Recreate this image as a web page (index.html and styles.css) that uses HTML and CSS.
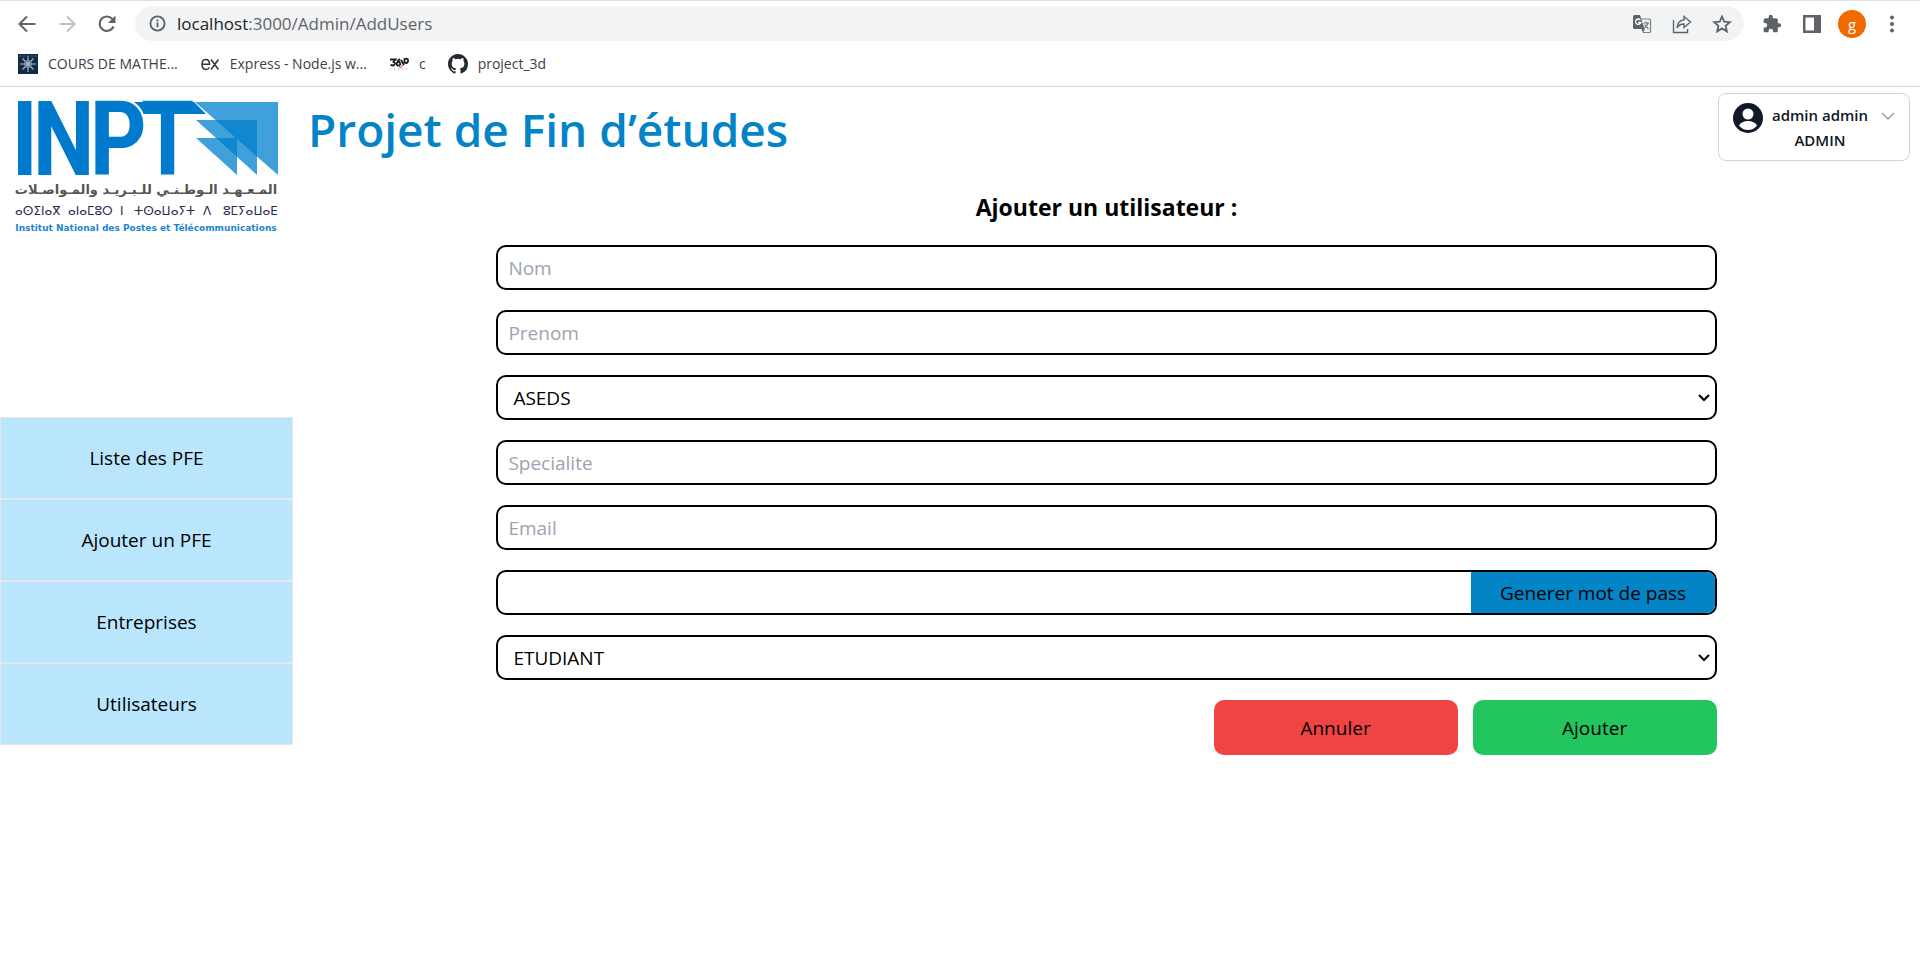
FILE: index.html
```html
<!DOCTYPE html>
<html lang="fr">
<head>
<meta charset="utf-8">
<title>Projet de Fin d’études</title>
<link rel="stylesheet" href="styles.css">
</head>
<body>
<div class="browser">
  <div class="toolbar">
    <button class="tool" aria-label="Retour"><svg class="icon" viewBox="0 0 20 20"><path d="M18.500 10H3M10 2.500L2.500 10l7.500 7.500" fill="none" stroke="#5f6368" stroke-width="2"/></svg></button>
    <button class="tool" aria-label="Suivant"><svg class="icon" viewBox="0 0 20 20"><path d="M2.500 10H17M10 2.500l7.500 7.500-7.500 7.500" fill="none" stroke="#bdc1c6" stroke-width="2"/></svg></button>
    <button class="tool" aria-label="Actualiser"><svg class="icon" viewBox="0 0 20 20"><path d="M16.500 12.500A7.200 7.200 0 1 1 15.300 5" fill="none" stroke="#5f6368" stroke-width="2.200"/><path d="M18.500 1.500v7.500H11z" fill="#5f6368"/></svg></button>
    <div class="omnibox">
      <svg class="info" viewBox="0 0 18 18"><circle cx="9" cy="9" r="7.500" fill="none" stroke="#5f6368" stroke-width="2"/><path d="M9 8v5M9 4.800v2" stroke="#5f6368" stroke-width="2"/></svg>
      <span class="url"><span class="host">localhost</span>:3000/Admin/AddUsers</span>
      <button class="tool" aria-label="Traduire"><svg class="icon" viewBox="0 0 20 20"><path d="M9 5h8.500q1 0 1 1v11.500q0 1-1 1H11" fill="none" stroke="#7d8084" stroke-width="1.200"/><path d="M2.500 1H8l4.500 14H2.500Q1 15 1 13.500v-11Q1 1 2.500 1z" fill="#5f6368"/><path d="M9.500 15H13l-2 3.500z" fill="#5f6368"/><path d="M8.300 6A2.700 2.700 0 1 0 8.800 8.500H6.300" fill="none" stroke="#fff" stroke-width="1.300"/><path d="M11.500 9H17M14.200 7.500V9M16 9q-.7 3.500-3.500 5M12.700 10.500q1 2.500 3.800 4.500" fill="none" stroke="#6f7377" stroke-width="1.200"/></svg></button>
      <button class="tool" aria-label="Partager"><svg class="icon" viewBox="0 0 20 20"><path d="M1.500 6v12.500h14V15M12 2.500l6.500 5.500-6.500 5.500V10q-5 0-7 4 .5-7.500 7-8.300z" fill="none" stroke="#5f6368" stroke-width="1.400"/></svg></button>
      <button class="tool" aria-label="Favori"><svg class="icon" viewBox="0 0 20 20"><path d="M10 2.500l2.200 5.100 5.600.5-4.200 3.700 1.200 5.500L10 14.400l-4.800 2.900 1.200-5.500-4.200-3.700 5.600-.5z" fill="none" stroke="#5f6368" stroke-width="1.800"/></svg></button>
    </div>
    <div class="actions">
      <button class="tool" aria-label="Extensions"><svg class="icon" viewBox="0 0 24 24"><path d="M20.500 11H19V7c0-1.100-.9-2-2-2h-4V3.500a2.500 2.500 0 0 0-5 0V5H4c-1.100 0-2 .9-2 2v3.800h1.500a2.700 2.700 0 0 1 0 5.400H2V20c0 1.100.9 2 2 2h3.800v-1.500a2.700 2.700 0 0 1 5.400 0V22H17c1.100 0 2-.9 2-2v-4h1.500a2.500 2.500 0 0 0 0-5z" fill="#5f6368"/></svg></button>
      <button class="tool" aria-label="Panneau latéral"><svg class="icon" viewBox="0 0 20 20"><path d="M1 1h18v18H1zM3.500 3.500v13H12v-13z" fill="#5f6368" fill-rule="evenodd"/></svg></button>
      <button class="avatar">g</button>
      <button class="tool" aria-label="Menu"><svg class="icon" viewBox="0 0 20 20" fill="#5f6368"><circle cx="10" cy="3.500" r="2"/><circle cx="10" cy="10" r="2"/><circle cx="10" cy="16.500" r="2"/></svg></button>
    </div>
  </div>
  <nav class="bookmarks">
    <a href="#"><svg class="icon" viewBox="0 0 20 20"><path d="M0 0h20v20H0z" fill="#102a48"/><path d="M10 2v16M2 10h16M4.500 4.500l11 11M15.500 4.500l-11 11" stroke="#a9bccb" stroke-width="1.100"/><circle cx="10" cy="10" r="3.500" fill="none" stroke="#8da5b8"/><path d="M1 2h18" stroke="#567" stroke-dasharray="2 2"/></svg>COURS DE MATHE...</a>
    <a href="#"><svg class="icon" viewBox="0 0 20 20"><path d="M2 10.300h7.500Q9.500 5.500 5.800 5.500T2 10.300 5.800 15.500q2.700 0 3.500-2M11 5.500l7.500 10M18.500 5.500L11 15.500" fill="none" stroke="#333" stroke-width="1.500"/></svg>Express - Node.js w...</a>
    <a href="#"><svg class="icon" viewBox="0 0 20 20"><path d="M1 5.500h5.500L4.500 8q3 1 0 3.500L1.500 11M8 7.500l3-2.500M8 8.500q-1 3 1.500 3t1.500-2.500-3 0M12 6l3 5M15.500 5q4-1 3.500 2t-3.500 1.500z" fill="none" stroke="#1c1c1c" stroke-width="1.800"/><path d="M9.500 11l2 3 2.500-3" stroke="#d33" fill="none"/><path d="M1 15h18" stroke="#999" stroke-dasharray="1 3"/></svg>c</a>
    <a href="#"><svg class="icon" viewBox="0 0 16 16"><path fill="#24292f" d="M8 0C3.580 0 0 3.580 0 8c0 3.540 2.290 6.530 5.470 7.590.4.070.55-.17.55-.38 0-.19-.01-.82-.01-1.490-2.010.37-2.530-.49-2.690-.94-.09-.23-.48-.94-.82-1.130-.28-.15-.68-.52-.01-.53.63-.01 1.080.58 1.230.82.720 1.210 1.870.87 2.330.66.070-.52.280-.87.510-1.070-1.780-.2-3.640-.89-3.640-3.950 0-.87.310-1.590.82-2.150-.08-.2-.36-1.020.08-2.120 0 0 .67-.21 2.200.82a7.600 7.600 0 0 1 4 0c1.530-1.040 2.200-.82 2.200-.82.440 1.100.160 1.920.080 2.120.510.560.820 1.270.820 2.150 0 3.070-1.870 3.750-3.650 3.950.290.250.540.730.540 1.480 0 1.070-.01 1.930-.01 2.200 0 .21.150.46.550.38A8 8 0 0 0 16 8c0-4.420-3.580-8-8-8z"/></svg>project_3d</a>
  </nav>
</div>
<div class="app">
  <aside class="sidebar">
    <svg class="logo" viewBox="0 0 264 134" role="img" aria-label="INPT">
      <g fill="#007acc">
        <path d="M119 0h60l12 12h-66z"/>
        <text class="logo-mark" y="73"><tspan x="-4 17">IN</tspan><tspan x="125">T</tspan><tspan class="logo-bowl" x="74">P</tspan></text>
      </g>
      <g fill="#0080cc" fill-opacity=".75">
        <path d="M180 0h83v73z"/><path d="M181 18h61v55z"/><path d="M181 36h41v37z"/>
      </g>
      <text class="logo-arabic" x="131" y="92">المـعـهـد الـوطـنـي للـبـريـد والمـواصـلات</text>
      <text class="logo-tifinagh" y="113"><tspan x="0">ⴰⵙⵉⵏⴰⴳ</tspan><tspan x="53">ⴰⵏⴰⵎⵓⵔ</tspan><tspan x="105">ⵏ</tspan><tspan x="119">ⵜⵙⴰⵡⴰⵢⵜ</tspan><tspan x="188">ⴷ</tspan><tspan x="208">ⵓⵎⵢⴰⵡⴰⴹ</tspan></text>
      <text class="logo-name" x="131" y="129">Institut National des Postes et Télécommunications</text>
    </svg>
    <nav class="menu">
      <a href="#">Liste des PFE</a>
      <a href="#">Ajouter un PFE</a>
      <a href="#">Entreprises</a>
      <a href="#">Utilisateurs</a>
    </nav>
  </aside>
  <div class="content">
    <header class="header">
      <h1>Projet de Fin d’études</h1>
      <button class="profile">
        <svg class="profile-icon" viewBox="0 0 30 30"><circle cx="15" cy="15" r="15" fill="#111827"/><circle cx="15" cy="11" r="5.500" fill="#fff"/><path d="M6 22.500q2.500-4.500 9-4.500t9 4.500q-3.500 4.500-9 4.500t-9-4.500z" fill="#fff"/></svg>
        <span class="profile-text">admin admin<br>ADMIN</span>
        <svg class="chevron" viewBox="0 0 14 14"><path d="M1 4l6 6 6-6" fill="none" stroke="#9ca3af" stroke-width="1.500"/></svg>
      </button>
    </header>
    <form class="form">
      <h2>Ajouter un utilisateur :</h2>
      <input class="field" type="text" placeholder="Nom" aria-label="Nom">
      <input class="field" type="text" placeholder="Prenom" aria-label="Prenom">
      <select class="field" aria-label="Filière"><option>ASEDS</option></select>
      <input class="field" type="text" placeholder="Specialite" aria-label="Specialite">
      <input class="field" type="email" placeholder="Email" aria-label="Email">
      <div class="field password">
        <input type="text" aria-label="Mot de passe">
        <button type="button">Generer mot de pass</button>
      </div>
      <select class="field" aria-label="Rôle"><option>ETUDIANT</option></select>
      <div class="buttons">
        <button type="reset" class="cancel">Annuler</button>
        <button type="submit" class="submit">Ajouter</button>
      </div>
    </form>
  </div>
</div>
</body>
</html>
```
FILE: styles.css
```css
* { box-sizing: border-box; }
body {
  margin: 0;
  background: #fff;
  color: #000;
  font-family: "Open Sans", "Noto Sans", sans-serif;
  font-size: 19px;
  line-height: 30px;
}
button, input, select { font: inherit; color: inherit; margin: 0; }
button { border: 0; padding: 0; background: none; }
a { color: inherit; text-decoration: none; }
svg { display: block; flex: none; }

.browser { border-top: 1px solid #dee1e6; border-bottom: 1px solid #d5d7da; }
.toolbar { display: flex; align-items: center; gap: 20px; padding: 5px 18px 5px 17px; }
.tool { display: flex; flex: none; }
.icon { width: 20px; height: 20px; }
.omnibox {
  display: flex;
  align-items: center;
  flex: 1;
  gap: 20px;
  height: 35px;
  margin: 0 -2px;
  padding: 0 12px 0 14px;
  border-radius: 18px;
  background: #f1f3f4;
}
.info { width: 17px; height: 17px; }
.url { flex: 1; margin-left: -9px; color: #5f6368; font-size: 17px; }
.host { color: #202124; }
.actions { display: flex; align-items: center; gap: 20px; }
.avatar {
  width: 28px;
  height: 28px;
  margin: 0 -4px;
  border-radius: 50%;
  background: #f06a00;
  color: #fff;
  font-size: 15px;
  line-height: 24px;
}
.bookmarks { display: flex; gap: 22px; padding: 3px 18px 7px; color: #3c4043; font-size: 14px; }
.bookmarks a { display: flex; align-items: center; gap: 10px; }

.app { display: flex; }
.sidebar { width: 293px; flex: none; }
.logo { width: 264px; margin: 15px 0 0 15px; overflow: visible; }
.logo-mark { font: 600 103px "Roboto Condensed", Roboto, sans-serif; }
.logo-bowl { stroke: #fff; stroke-width: 4px; paint-order: stroke; }
.logo-arabic { font: bold 13px "DejaVu Sans", sans-serif; fill: #555; text-anchor: middle; }
.logo-tifinagh { font: 12px "DejaVu Sans", sans-serif; fill: #2b2b52; }
.logo-name { font: bold 9px "DejaVu Sans", sans-serif; fill: #1c86cf; text-anchor: middle; }
.menu { margin-top: 181px; }
.menu a {
  display: block;
  padding: 25px 0;
  border: 1px solid #e5e7eb;
  background: #bae6fd;
  text-align: center;
}

.content { flex: 1; }
.header { display: flex; justify-content: space-between; align-items: flex-start; padding: 6px 10px 0 15px; }
h1 { margin: 0; color: #0284c7; font-size: 46px; font-weight: 600; line-height: 73px; }
.profile {
  display: flex;
  align-items: flex-start;
  gap: 9px;
  padding: 9px 14px 7px;
  border: 1px solid #d1d5db;
  border-radius: 8px;
  color: #111827;
  font-size: 15px;
  font-weight: 600;
  line-height: 25px;
}
.profile-icon { width: 30px; height: 30px; }
.profile-text { text-align: center; }
.chevron { width: 14px; height: 14px; margin: 6px 0 0 4px; }

.form { display: flex; flex-direction: column; gap: 20px; width: 75%; margin: 0 auto; padding-top: 23px; }
h2 { margin: 0; font-size: 23px; font-weight: 700; line-height: 36px; text-align: center; }
.field {
  width: 100%;
  height: 45px;
  padding: 0 10px;
  border: 2px solid #000;
  border-radius: 10px;
  background: #fff;
}
.field::placeholder { color: #9ca3af; opacity: 1; }
select.field {
  padding: 0 15px;
  appearance: none;
  background: #fff url("data:image/svg+xml,%3Csvg xmlns='http://www.w3.org/2000/svg' width='12' height='8'%3E%3Cpath d='M1 1l5 5 5-5' fill='none' stroke='%23000' stroke-width='2'/%3E%3C/svg%3E") no-repeat right 5px center;
}
.password { display: flex; padding: 0; overflow: hidden; }
.password input { flex: 1; min-width: 0; padding: 0 10px; border: 0; background: none; }
.password button { width: 20%; background: #0284c7; }
.buttons { display: flex; justify-content: flex-end; gap: 15px; }
.buttons button { width: 20%; padding: 13px 0 12px; border-radius: 10px; }
.cancel { background: #ef4444; }
.submit { background: #22c55e; }
```
